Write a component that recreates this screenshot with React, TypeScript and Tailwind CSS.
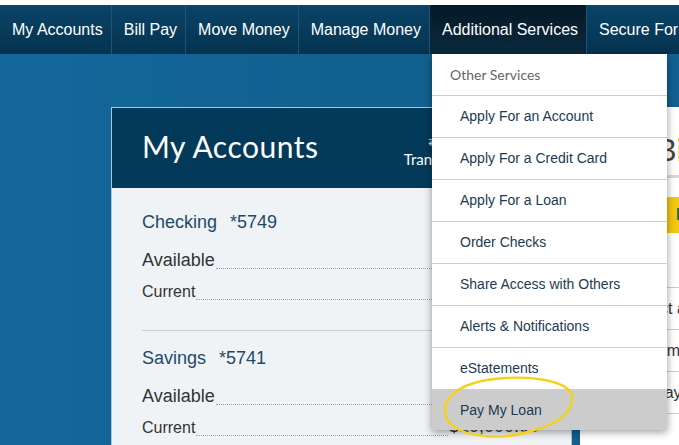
import React from 'react';

const navItems = ['My Accounts', 'Bill Pay', 'Move Money', 'Manage Money', 'Additional Services', 'Secure Forms'];

const menuItems = [
  'Apply For an Account',
  'Apply For a Credit Card',
  'Apply For a Loan',
  'Order Checks',
  'Share Access with Others',
  'Alerts & Notifications',
  'eStatements',
];

function AccountBlock({ name, num, first }: { name: string; num: string; first?: boolean }) {
  return (
    <div className={first ? '' : 'border-t border-[#c9d0d6] pt-[15px]'}>
      <div className="h-[24px] flex items-center text-[18px] text-[#1f4a68] gap-[13px]">
        <span>{name}</span>
        <span>{num}</span>
      </div>
      <div className="mt-[16px] h-[24px] flex items-end text-[18px] text-[#333]">
        <span>Available</span>
        <span className="flex-1 border-b border-dotted border-[#9aa3aa] mb-[5px] mx-[1px]" />
        <span className="w-[110px] text-right">$1,240.16</span>
      </div>
      <div className="mt-[8px] h-[22px] flex items-end text-[16px] text-[#333]">
        <span>Current</span>
        <span className="flex-1 border-b border-dotted border-[#9aa3aa] mb-[4px] mx-[1px]" />
        <span className="w-[110px] text-[18px] text-right pr-[28px]">$10,000.00</span>
      </div>
    </div>
  );
}

export default function App() {
  return (
    <div className="relative w-[679px] h-[445px] overflow-hidden bg-white font-['Liberation_Sans',Arial,sans-serif]">
      <div className="h-[5px] bg-white" />
      <nav className="h-[49px] flex bg-gradient-to-b from-[#0a4468] to-[#05334f] text-white text-[16px] whitespace-nowrap">
        {navItems.map((item) => (
          <div
            key={item}
            className={
              'flex items-center pl-[12px] pr-[8px] border-r border-[#1d5478] ' +
              (item === 'Additional Services' ? 'bg-gradient-to-b from-[#051826] to-[#0a2b40]' : '')
            }
          >
            {item}
          </div>
        ))}
      </nav>

      <main className="h-[391px] flex gap-[8px] pl-[111px] pt-[53px] bg-gradient-to-r from-[#14689d] via-[#12608f] to-[#12608f]">
        <section className="w-[461px] shrink-0 flex flex-col border border-[#a9c7dc] border-b-0 bg-[#eff3f6]">
          <div className="h-[80px] shrink-0 bg-[#033a5a] flex items-center justify-between pl-[30px] pr-[10px]">
            <h1 className="text-[30px] text-white font-['Lato',sans-serif] tracking-[0.5px] mb-[3px]">My Accounts</h1>
            <div className="flex flex-col items-center text-white text-[15px] font-['Lato',sans-serif] mr-[104px] mt-[8px]">
              <span className="text-[14px] leading-[14px] text-[#c9d6df] pl-[8px]">⇄</span>
              <span>Transfer</span>
            </div>
          </div>
          <div className="pt-[22px] pl-[30px] pr-[12px]">
            <AccountBlock name="Checking" num="*5749" first />
            <div className="h-[26px]" />
            <AccountBlock name="Savings" num="*5741" />
          </div>
        </section>

        <section className="flex-1 flex flex-col bg-white">
          <div className="h-[71px] flex items-center pt-[16px] pl-[77px] text-[30px] font-['Lato',sans-serif] text-[#444] border-b-[3px] border-[#d6d9dc] whitespace-nowrap">
            B<span className="text-[#d9a300]">ill Pay</span>
          </div>
          <div className="mt-[19px] ml-[20px] h-[36px] bg-[#f3c613] flex items-center pl-[76px] text-[16px] font-bold text-[#1d6b2a] whitespace-nowrap">
            Make a Payment
          </div>
          <div className="mt-[54px] flex flex-col text-[16px] text-[#333] whitespace-nowrap">
            {['Select a Payee', 'Amount', 'Pay date'].map((r, i) => (
              <div key={r} className="h-[42px] border-t border-[#c8cdd1] flex items-center" style={{ paddingLeft: [48, 76, 74][i] }}>
                {r}
              </div>
            ))}
            <div className="border-t border-[#c8cdd1]" />
          </div>
        </section>
      </main>

      {/* Additional Services dropdown */}
      <div className="absolute left-[432px] top-[54px] w-[235px] bg-white shadow-[0_2px_8px_rgba(0,0,0,0.4)] whitespace-nowrap">
        <div className="h-[41px] flex items-center pl-[18px] text-[14px] text-[#666] font-['Lato',sans-serif]">
          Other Services
        </div>
        {menuItems.map((m) => (
          <div key={m} className="h-[42px] border-t border-[#cfcfcf] flex items-center pl-[28px] text-[14px] text-[#1d3a52]">
            {m}
          </div>
        ))}
        <div className="h-[41px] border-t border-[#cfcfcf] bg-[#cccccc] flex items-center pl-[28px] text-[14px] text-[#1d3a52]">
          Pay My Loan
        </div>
      </div>

      {/* hand-drawn highlight */}
      <svg className="absolute left-0 top-0 pointer-events-none" width="679" height="445" viewBox="0 0 679 445" fill="none">
        <path
          d="M540 428 C514 440 468 440 451 424 C437 410 446 387 487 380 C528 374 572 380 572 398 C572 418 546 430 506 436"
          stroke="#f6d11a"
          strokeWidth="2.4"
          strokeLinecap="round"
        />
      </svg>
    </div>
  );
}
